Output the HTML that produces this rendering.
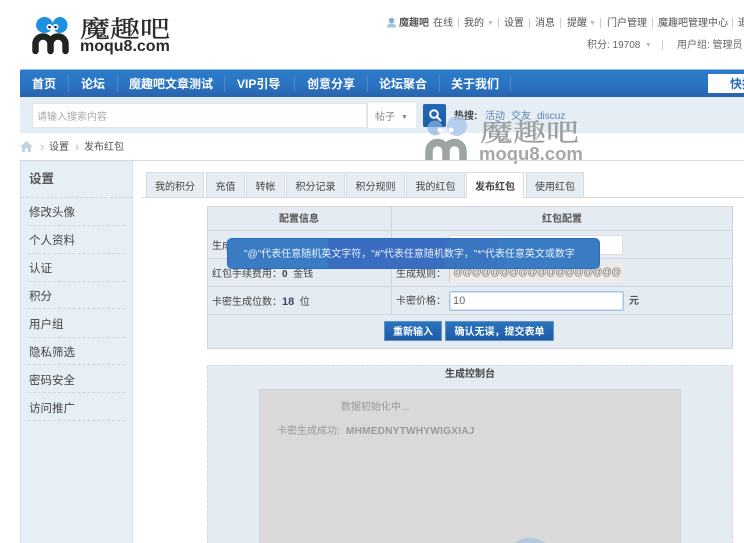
<!DOCTYPE html>
<html><head><meta charset="utf-8">
<style>
html,body{margin:0;padding:0;background:#fff;width:744px;height:543px;overflow:hidden}
#w{position:relative;width:744px;height:543px;overflow:hidden;font-family:"Liberation Sans","WenQuanYi Zen Hei","Noto Sans CJK SC",sans-serif;font-size:10px;color:#444}
.a{position:absolute;white-space:nowrap;line-height:1}
.box{position:absolute}
.nav{color:#fff;font-weight:bold;font-size:12px;top:78px}
.sep{position:absolute;top:75px;width:1px;height:17px;background:#4f89c9}
.top{font-size:10px;color:#555;top:19px}
.tsep{position:absolute;width:1px;height:10px;background:#ccc;top:18px}
.tab{position:absolute;top:172px;height:24px;background:#e6edf3;border:1px solid #d5dbe0;border-bottom:0;text-align:center;line-height:30px;font-size:10px;color:#444;box-sizing:content-box}
.side{left:29px;font-size:11.5px;color:#444}
.dash{position:absolute;left:28px;width:97px;border-top:1px dashed #d2d6da}
.hr{position:absolute;left:208px;width:524px;height:1px;background:#cfd5da}
.btn{position:absolute;top:321px;height:20px;background:linear-gradient(#2d75bd,#1f5ba6);border:1px solid #5c93c9;box-sizing:border-box;color:#fff;font-weight:bold;font-size:10px;text-align:center;line-height:21px}
</style></head><body><div id="w">

<!-- logo -->
<svg class="box" style="left:30px;top:15px" width="42" height="42" viewBox="0 0 42 42">
<ellipse cx="14.500" cy="10" rx="8.500" ry="8" fill="#1d90e0"/>
<ellipse cx="30" cy="10" rx="7.500" ry="8" fill="#1d90e0"/>
<circle cx="19.500" cy="12" r="3" fill="#fff"/><circle cx="19.500" cy="12" r="1.300" fill="#123"/>
<circle cx="25.500" cy="12" r="3" fill="#fff"/><circle cx="25.500" cy="12" r="1.300" fill="#123"/>
<path d="M5.500 36V29a7.500 7.500 0 0 1 15 0V36M20.500 29a7.500 7.500 0 0 1 15 0V36" fill="none" stroke="#20241f" stroke-width="6.500" stroke-linecap="round"/>
</svg>
<div class="a" style="left:80px;top:15px;font:normal 30px/1 'Noto Serif CJK SC',serif;-webkit-text-stroke:.4px #2a2a2a;color:#2a2a2a;transform:scaleY(.78);transform-origin:0 0">魔趣吧</div>
<div class="a" style="left:80px;top:39px;font:bold 16px/1 'Liberation Sans',sans-serif;color:#2a2a2a">moqu8.com</div>

<!-- top links -->
<svg class="box" style="left:386px;top:17px" width="11" height="11" viewBox="0 0 11 11"><circle cx="5.500" cy="3.500" r="2.800" fill="#8cb0d4"/><path d="M1 10.500C1 7 3 6.500 5.500 6.500S10 7 10 10.500Z" fill="#a9c3dd"/></svg>
<div class="a top" style="left:399px;font-weight:bold">魔趣吧</div>
<div class="a top" style="left:433px">在线</div><div class="tsep" style="left:458px"></div>
<div class="a top" style="left:464px">我的</div>
<div class="a top" style="left:487px;font-size:7px;top:20px;color:#bbb">▼</div><div class="tsep" style="left:498px"></div>
<div class="a top" style="left:504px">设置</div><div class="tsep" style="left:529px"></div>
<div class="a top" style="left:535px">消息</div><div class="tsep" style="left:560px"></div>
<div class="a top" style="left:567px">提醒</div>
<div class="a top" style="left:589px;font-size:7px;top:20px;color:#bbb">▼</div><div class="tsep" style="left:600px"></div>
<div class="a top" style="left:607px">门户管理</div><div class="tsep" style="left:652px"></div>
<div class="a top" style="left:658px">魔趣吧管理中心</div><div class="tsep" style="left:732px"></div>
<div class="a top" style="left:738px">退</div>
<div class="a top" style="left:587px;top:41px;color:#666">积分: 19708</div>
<div class="a top" style="left:645px;top:42px;font-size:7px;color:#bbb">▼</div>
<div class="tsep" style="left:662px;top:40px"></div>
<div class="a top" style="left:677px;top:41px;color:#666">用户组: 管理员</div>

<!-- nav -->
<div class="box" style="left:20px;top:69px;width:724px;height:28px;background:linear-gradient(#2c7ac8 0,#2a76c4 50%,#2963ae 100%);border-top:1px solid #8fc0ea;box-sizing:border-box;border-radius:2px 0 0 0"></div>
<div class="a nav" style="left:32px">首页</div><div class="sep" style="left:68px"></div>
<div class="a nav" style="left:81px">论坛</div><div class="sep" style="left:117px"></div>
<div class="a nav" style="left:129px">魔趣吧文章测试</div><div class="sep" style="left:224px"></div>
<div class="a nav" style="left:237px">VIP引导</div><div class="sep" style="left:294px"></div>
<div class="a nav" style="left:307px">创意分享</div><div class="sep" style="left:367px"></div>
<div class="a nav" style="left:379px">论坛聚合</div><div class="sep" style="left:439px"></div>
<div class="a nav" style="left:451px">关于我们</div><div class="sep" style="left:510px"></div>
<div class="box" style="left:708px;top:74px;width:36px;height:19px;background:#fff"></div>
<div class="a" style="left:730px;top:78px;font-weight:bold;font-size:12px;color:#2b6cb5">快捷</div>

<!-- search band -->
<div class="box" style="left:20px;top:97px;width:724px;height:36px;background:#e5edf5"></div>
<div class="box" style="left:32px;top:103px;width:335px;height:25px;background:#fff;border:1px solid #dfe5ea;box-sizing:border-box"></div>
<div class="a" style="left:37px;top:113px;font-size:10px;color:#aaa">请输入搜索内容</div>
<div class="box" style="left:367px;top:103px;width:49px;height:25px;background:#fff;border-left:1px solid #e8e3d8;box-sizing:border-box"></div>
<div class="a" style="left:375px;top:113px;font-size:10px;color:#888">帖子</div>
<div class="a" style="left:401px;top:114px;font-size:7px;color:#888">▼</div>
<div class="box" style="left:423px;top:104px;width:23px;height:23px;background:linear-gradient(#2469b4,#1d5ca8);border-radius:2px"></div>
<svg class="box" style="left:428px;top:108px" width="14" height="14" viewBox="0 0 14 14"><circle cx="6" cy="6" r="3.800" fill="none" stroke="#fff" stroke-width="2"/><path d="M9 9L13 13" stroke="#fff" stroke-width="2.200"/></svg>
<div class="a" style="left:454px;top:112px;font-size:10px;font-weight:bold;color:#444">热搜:</div>
<div class="a" style="left:485px;top:112px;font-size:10px;color:#5f86b4">活动</div>
<div class="box" style="left:485px;top:122px;width:25px;height:1px;background:#8aa6c6"></div>
<div class="a" style="left:511px;top:112px;font-size:10px;color:#5f86b4">交友</div>
<div class="a" style="left:537px;top:112px;font-size:10px;color:#5f86b4">discuz</div>

<!-- watermark -->
<svg class="box" style="left:424px;top:116px" width="46" height="45" viewBox="0 0 46 45">
<circle cx="11" cy="12" r="7.500" fill="#8fb6e2" fill-opacity=".7"/><circle cx="33" cy="10" r="10" fill="#a9c6e8" fill-opacity=".8"/>
<circle cx="16" cy="14" r="2.500" fill="#fff"/><circle cx="27" cy="14" r="2.500" fill="#fff"/>
<path d="M5 46V35a8.500 8.500 0 0 1 17 0V46M22 35a8.500 8.500 0 0 1 17 0V46" fill="none" stroke="#9ca5a2" stroke-width="7.500"/>
</svg>
<div class="a" style="left:480px;top:118px;font:normal 33px/1 'Noto Serif CJK SC',serif;-webkit-text-stroke:.4px #9aa09d;color:#9aa09d;transform:scaleY(.76);transform-origin:0 0">魔趣吧</div>
<div class="a" style="left:479px;top:145px;font:bold 18.500px/1 'Liberation Sans',sans-serif;color:#a4a9a6">moqu8.com</div>

<!-- breadcrumb -->
<svg class="box" style="left:20px;top:141px" width="13" height="11" viewBox="0 0 13 11"><path d="M6.500 0L13 6H11V11H8V7.500H5V11H2V6H0Z" fill="#c3d3e4"/></svg>
<div class="a" style="left:40px;top:140px;font-size:13px;color:#bbb">›</div>
<div class="a" style="left:49px;top:143px;font-size:10px;color:#555">设置</div>
<div class="a" style="left:75px;top:140px;font-size:13px;color:#bbb">›</div>
<div class="a" style="left:84px;top:143px;font-size:10px;color:#555">发布红包</div>

<!-- sidebar -->
<div class="box" style="left:20px;top:160px;width:724px;height:1px;background:#d5d9dd"></div>
<div class="box" style="left:20px;top:161px;width:113px;height:382px;background:#e6eef6;border-left:1px solid #d5dde5;border-right:1px solid #dde5ec;box-sizing:border-box"></div>
<div class="a side" style="top:173px;font-size:12.500px;color:#555;font-weight:bold">设置</div>
<div class="dash" style="top:197px;left:21px;width:111px"></div>
<div class="a side" style="top:208px">修改头像</div><div class="dash" style="top:225px"></div>
<div class="a side" style="top:236px">个人资料</div><div class="dash" style="top:253px"></div>
<div class="a side" style="top:264px">认证</div><div class="dash" style="top:281px"></div>
<div class="a side" style="top:292px">积分</div><div class="dash" style="top:308px"></div>
<div class="a side" style="top:320px">用户组</div><div class="dash" style="top:337px"></div>
<div class="a side" style="top:348px">隐私筛选</div><div class="dash" style="top:364px"></div>
<div class="a side" style="top:376px">密码安全</div><div class="dash" style="top:392px"></div>
<div class="a side" style="top:404px">访问推广</div><div class="dash" style="top:420px"></div>

<!-- tabs -->
<div class="box" style="left:142px;top:197px;width:602px;height:1px;background:#d5d9dd"></div>
<div class="tab" style="left:146px;width:56px">我的积分</div>
<div class="tab" style="left:206px;width:37px">充值</div>
<div class="tab" style="left:246px;width:37px">转帐</div>
<div class="tab" style="left:286px;width:57px">积分记录</div>
<div class="tab" style="left:346px;width:57px">积分规则</div>
<div class="tab" style="left:406px;width:57px">我的红包</div>
<div class="tab" style="left:466px;width:56px;height:25px;background:#fff;font-weight:bold">发布红包</div>
<div class="tab" style="left:526px;width:56px">使用红包</div>

<!-- table -->
<div class="box" style="left:207px;top:206px;width:526px;height:143px;background:#e4ebf2;border:1px solid #cfd5da;box-sizing:border-box"></div>
<div class="hr" style="top:230px"></div><div class="hr" style="top:258px"></div><div class="hr" style="top:286px"></div><div class="hr" style="top:314px"></div>
<div class="box" style="left:391px;top:207px;width:1px;height:108px;background:#cfd5da"></div>
<div class="a" style="left:279px;top:215px;font-size:10px;font-weight:bold;color:#555">配置信息</div>
<div class="a" style="left:542px;top:215px;font-size:10px;font-weight:bold;color:#555">红包配置</div>
<div class="a" style="left:212px;top:242px;font-size:10px">生成</div>
<div class="a" style="left:212px;top:270px;font-size:10px">红包手续费用：<b>0</b>&nbsp; 金钱</div>
<div class="a" style="left:212px;top:297px;font-size:10px">卡密生成位数：<b style="color:#446;font-size:11px">18</b>&nbsp; 位</div>
<div class="box" style="left:449px;top:235px;width:174px;height:20px;background:#fff;border:1px solid #ddd;box-sizing:border-box"></div>
<div class="a" style="left:396px;top:270px;font-size:10px">生成规则：</div>
<div class="box" style="left:449px;top:263px;width:174px;height:19px;background:#eeeae4;border-left:1px solid #ccc;box-sizing:border-box"></div>
<div class="a" style="left:453px;top:268px;font-size:10px;color:#777;letter-spacing:-.85px">@@@@@@@@@@@@@@@@@@</div>
<div class="a" style="left:396px;top:297px;font-size:10px">卡密价格：</div>
<div class="box" style="left:449px;top:291px;width:175px;height:20px;background:#fff;border:1px solid #a6c5e6;box-shadow:inset 0 0 0 1px #d3e2f2;border-radius:2px;box-sizing:border-box"></div>
<div class="a" style="left:453px;top:296px;font-size:11px;color:#666">10</div>
<div class="a" style="left:629px;top:297px;font-size:10px;font-weight:bold;color:#555">元</div>
<div class="btn" style="left:384px;width:58px">重新输入</div>
<div class="btn" style="left:445px;width:109px">确认无误，提交表单</div>

<!-- tooltip -->
<div class="box" style="left:227px;top:238px;width:373px;height:31px;background:#3a7cc3;border:1px solid #2a6cc0;border-radius:5px;box-sizing:border-box"></div>
<div class="box" style="left:328px;top:239px;width:117px;height:29px;background:#3a6cc1"></div>
<div class="box" style="left:445px;top:239px;width:53px;height:29px;background:#3a75c2"></div>
<div class="a" style="left:244px;top:250px;font-size:10px;color:#eaf2fa">"@"代表任意随机英文字符，"#"代表任意随机数字，"*"代表任意英文或数字</div>

<!-- console -->
<div class="box" style="left:207px;top:365px;width:526px;height:178px;background:#e4ebf3;border:1px dashed #d5d9dd;border-bottom:0;box-sizing:border-box"></div>
<div class="a" style="left:445px;top:370px;font-size:10px;font-weight:bold;color:#444">生成控制台</div>
<div class="box" style="left:259px;top:389px;width:422px;height:154px;background:#d9d9d9;border:1px solid #cdd3d8;border-bottom:0;box-sizing:border-box"></div>
<svg class="box" style="left:509px;top:538px" width="42" height="5" viewBox="0 0 42 5"><path d="M6 5C10 2 15 0 21 0S32 2 36 5Z" fill="#b3c8dc"/></svg>
<div class="a" style="left:341px;top:403px;font-size:10px;color:#999">数据初始化中...</div>
<div class="a" style="left:277px;top:427px;font-size:10px;color:#999">卡密生成成功:</div>
<div class="a" style="left:346px;top:427px;font-size:10px;font-weight:bold;color:#999;letter-spacing:.3px">MHMEDNYTWHYWIGXIAJ</div>
</div></body></html>
